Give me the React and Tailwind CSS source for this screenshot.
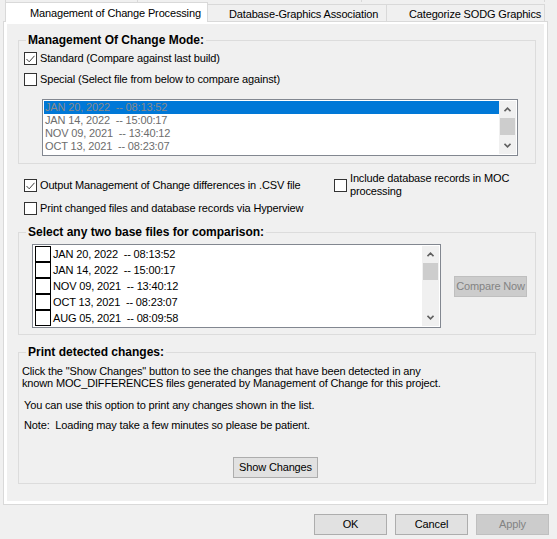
import React from "react";

function CheckBox({ checked }) {
  return (
    <span className="flex h-[13px] w-[13px] shrink-0 items-center justify-center border border-[#333333] bg-white">
      {checked && (
        <svg width="9" height="8" viewBox="0 0 9 8">
          <path d="M0.5 4 L3.2 6.8 L8.5 0.8" fill="none" stroke="#3c3c3c" strokeWidth="1" />
        </svg>
      )}
    </span>
  );
}

function Arrow({ down }) {
  return (
    <svg width="7" height="5" viewBox="0 0 7 5">
      <path
        d={down ? "M0.5 0.8 L3.5 3.8 L6.5 0.8" : "M0.5 4.2 L3.5 1.2 L6.5 4.2"}
        fill="none"
        stroke="#606060"
        strokeWidth="1.6"
      />
    </svg>
  );
}

function ScrollBar() {
  return (
    <div className="flex h-full w-[17px] shrink-0 flex-col bg-[#f0f0f0]">
      <div className="flex h-[17px] items-center justify-center">
        <Arrow />
      </div>
      <div className="mx-[1px] h-[17px] bg-[#cdcdcd]" />
      <div className="flex-1" />
      <div className="flex h-[17px] items-center justify-center">
        <Arrow down />
      </div>
    </div>
  );
}

function Button({ children, disabled, className = "" }) {
  return (
    <button
      className={
        "flex h-[21px] items-center justify-center border text-[11px] leading-none " +
        (disabled
          ? "border-[#bfbfbf] bg-[#cccccc] text-[#838383] "
          : "border-[#adadad] bg-[#e1e1e1] text-black ") +
        className
      }
    >
      {children}
    </button>
  );
}

const modeDates = [
  "JAN 20, 2022  -- 08:13:52",
  "JAN 14, 2022  -- 15:00:17",
  "NOV 09, 2021  -- 13:40:12",
  "OCT 13, 2021  -- 08:23:07",
];

const baseDates = [
  "JAN 20, 2022  -- 08:13:52",
  "JAN 14, 2022  -- 15:00:17",
  "NOV 09, 2021  -- 13:40:12",
  "OCT 13, 2021  -- 08:23:07",
  "AUG 05, 2021  -- 08:09:58",
];

export default function App() {
  return (
    <div className="h-[539px] w-[557px] overflow-hidden bg-[#f0f0f0] font-['Liberation_Sans',Arial,sans-serif] text-[11px] leading-[13px] tracking-[-0.15px] text-black">
      {/* tail of the tab row above */}
      <div className="flex h-[2px] pl-[5px]">
        <div className="w-[133px] border-l border-r border-[#d9d9d9]" />
        <div className="w-[224px] border-r border-[#d9d9d9]" />
        <div className="w-[183px] border-r border-[#d9d9d9]" />
      </div>

      {/* tabs */}
      <div className="flex h-[20px] items-end pl-[5px]">
        <div className="relative z-10 flex h-[20px] w-[203px] items-center border-l border-r border-t border-[#d9d9d9] bg-white pl-[24px] pt-[1px]">
          Management of Change Processing
        </div>
        <div className="flex h-[18px] w-[179px] items-center border-r border-t border-[#d9d9d9] pl-[21px] pt-[1px]">
          Database-Graphics Association
        </div>
        <div className="flex h-[18px] w-[158px] items-center border-r border-t border-[#d9d9d9] pl-[22px] pt-[1px]">
          Categorize SODG Graphics
        </div>
      </div>

      {/* tab page */}
      <div className="-mt-px ml-[3px] flex h-[484px] w-[545px] flex-col border border-[#d9d9d9] bg-white px-[3px] pb-[3px] pt-[2px]">
        <div className="flex-1 bg-[#f0f0f0] pl-[11px] pt-[10px]">
          {/* Management Of Change Mode */}
          <fieldset className="w-[518px] border border-[#dcdcdc] px-[5px] pb-[7px]">
            <legend className="ml-[2px] px-[2px] text-[12px] font-bold leading-[13px] tracking-normal">
              Management Of Change Mode:
            </legend>
            <div className="pt-[5px]">
              <div className="flex h-[13px] items-center gap-[3px]">
                <CheckBox checked />
                <span>Standard (Compare against last build)</span>
              </div>
              <div className="mt-[8px] flex h-[13px] items-center gap-[3px]">
                <CheckBox />
                <span>Special (Select file from below to compare against)</span>
              </div>
              <div className="ml-[18px] mt-[13px] flex h-[57px] w-[476px] border border-[#828790] bg-white p-[1px]">
                <div className="flex-1">
                  {modeDates.map((d, i) => (
                    <div
                      key={d}
                      className={
                        "h-[13px] whitespace-pre pl-[1px] leading-[13px] " +
                        (i === 0 ? "bg-[#0078d7] text-[#8a8a8a]" : "text-[#6d6d6d]")
                      }
                    >
                      {d}
                    </div>
                  ))}
                </div>
                <ScrollBar />
              </div>
            </div>
          </fieldset>

          {/* options */}
          <div className="mt-[8px] flex">
            <div className="w-[316px] pl-[6px] pt-[7px]">
              <div className="flex h-[13px] items-center gap-[3px]">
                <CheckBox checked />
                <span>Output Management of Change differences in .CSV file</span>
              </div>
              <div className="mt-[10px] flex h-[13px] items-center gap-[3px]">
                <CheckBox />
                <span>Print changed files and database records via Hyperview</span>
              </div>
            </div>
            <div className="flex items-center gap-[3px] self-start">
              <CheckBox />
              <span className="w-[185px] leading-[13px]">
                Include database records in MOC processing
              </span>
            </div>
          </div>

          {/* Select any two base files */}
          <fieldset className="mt-[11px] w-[518px] border border-[#dcdcdc] pb-[6px] pl-[13px]">
            <legend className="ml-[-6px] px-[2px] text-[12px] font-bold leading-[13px] tracking-normal">
              Select any two base files for comparison:
            </legend>
            <div className="flex items-center pt-[5px]">
              <div className="flex h-[84px] w-[409px] border border-[#828790] bg-white p-[1px]">
                <div className="flex-1 pl-[1px]">
                  {baseDates.map((d) => (
                    <div key={d} className="flex h-[16px] items-center">
                      <span className="h-[16px] w-[16px] shrink-0 border border-black" />
                      <span className="whitespace-pre pl-[2px]">{d}</span>
                    </div>
                  ))}
                </div>
                <ScrollBar />
              </div>
              <Button disabled className="ml-[13px] w-[73px]">
                Compare Now
              </Button>
            </div>
          </fieldset>

          {/* Print detected changes */}
          <fieldset className="mt-[11px] w-[518px] border border-[#dcdcdc] pb-[5px]">
            <legend className="ml-[7px] px-[2px] text-[12px] font-bold leading-[13px] tracking-normal">
              Print detected changes:
            </legend>
            <p className="pl-[3px] pt-[6px] leading-[12px]">
              Click the "Show Changes" button to see the changes that have been detected in any
              <br />
              known MOC_DIFFERENCES files generated by Management of Change for this project.
            </p>
            <p className="mt-[10px] pl-[5px] leading-[12px]">
              You can use this option to print any changes shown in the list.
            </p>
            <p className="mt-[8px] pl-[5px] leading-[12px]">
              Note:&nbsp; Loading may take a few minutes so please be patient.
            </p>
            <div className="mt-[26px] flex justify-center pr-[3px]">
              <Button className="w-[85px]">Show Changes</Button>
            </div>
          </fieldset>
        </div>
      </div>

      {/* dialog buttons */}
      <div className="mt-[9px] flex justify-end gap-[8px] pr-[8px]">
        <Button className="w-[73px]">OK</Button>
        <Button className="w-[73px]">Cancel</Button>
        <Button disabled className="w-[73px]">
          Apply
        </Button>
      </div>
    </div>
  );
}
